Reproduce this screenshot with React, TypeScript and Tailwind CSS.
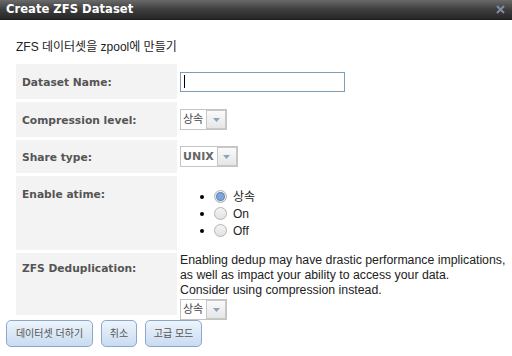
import React from "react";

const sans = "font-['Liberation_Sans','Noto_Sans_CJK_KR',sans-serif]";
const bold = "font-['DejaVu_Sans','Noto_Sans_CJK_KR',sans-serif]";

function Select({ label, strong }: { label: string; strong?: boolean }) {
  return (
    <div className="flex h-[21px] items-center border border-[#c4c4c4] bg-white">
      <span
        className={`px-[2px] text-[11px] leading-none ${
          strong ? `${bold} font-bold text-[#666]` : "text-[#444]"
        }`}
      >
        {label}
      </span>
      <span className="ml-[1px] flex h-[19px] w-[20px] items-center justify-center border border-[#c8c8c8] bg-gradient-to-b from-[#fafafa] to-[#e6e6e6]">
        <svg width="7" height="4" viewBox="0 0 7 4">
          <path d="M0 0h7L3.5 4z" fill="#8ea2c0" />
        </svg>
      </span>
    </div>
  );
}

function Radio({ checked, label }: { checked?: boolean; label: string }) {
  return (
    <li className="flex h-[17px] items-center">
      <span className="ml-[23px] mr-[10px] h-[4px] w-[4px] rounded-full bg-black" />
      <span className="flex h-[13px] w-[13px] items-center justify-center rounded-full border border-[#b4b4b4] bg-gradient-to-b from-[#f4f4f4] to-[#e2e2e2]">
        {checked && <span className="h-[7px] w-[7px] rounded-full bg-[#7ea5d6] ring-1 ring-[#5b86bd]" />}
      </span>
      <span className="ml-[6px] text-[12px] text-[#222]">{label}</span>
    </li>
  );
}

function Label({ children, pt }: { children: React.ReactNode; pt: string }) {
  return (
    <div className={`bg-[#f3f3f3] pl-[6px] ${pt} ${bold} text-[10.7px] font-bold leading-[14px] text-[#555]`}>
      {children}
    </div>
  );
}

const buttons = [
  { text: "데이터셋 더하기", w: "w-[87px]" },
  { text: "취소", w: "w-[36px]" },
  { text: "고급 모드", w: "w-[57px]" },
];

export default function App() {
  return (
    <div className={`h-[356px] w-[512px] overflow-hidden bg-white ${sans}`}>
      <div className="flex h-[20px] items-center justify-between border-b border-[#1e1e1e] bg-gradient-to-b from-[#6a6a6a] via-[#3e3e3e] to-[#262626] pl-[6px] pr-[7px]">
        <span className={`${bold} text-[11.6px] font-bold text-white`}>Create ZFS Dataset</span>
        <svg width="9" height="9" viewBox="0 0 9 9">
          <path d="M1 1l7 7M8 1L1 8" stroke="#7f8ea4" strokeWidth="2" />
        </svg>
      </div>

      <p className="ml-[16px] mt-[20px] text-[12px] leading-[15px] text-[#222]">ZFS 데이터셋을 zpool에 만들기</p>

      <div className="ml-[16px] mt-[9px] grid w-[496px] grid-cols-[161px_1fr] gap-y-[3px]">
        <Label pt="pt-[12px]">Dataset Name:</Label>
        <div className="flex h-[35px] items-center pl-[3px]">
          <div className="flex h-[20px] w-[165px] items-center border border-[#7f9db9] bg-white pl-[3px]">
            <span className="h-[13px] w-px bg-black" />
          </div>
        </div>

        <Label pt="pt-[12px]">Compression level:</Label>
        <div className="flex h-[35px] items-center pl-[3px]">
          <Select label="상속" />
        </div>

        <Label pt="pt-[11px]">Share type:</Label>
        <div className="flex h-[33px] items-center pl-[3px]">
          <Select label="UNIX" strong />
        </div>

        <Label pt="pt-[12px]">Enable atime:</Label>
        <div className="h-[74px] pt-[12px]">
          <ul>
            <Radio checked label="상속" />
            <Radio label="On" />
            <Radio label="Off" />
          </ul>
        </div>

        <Label pt="pt-[9px]">ZFS Deduplication:</Label>
        <div className="h-[62px] pl-[3px]">
          <p className="whitespace-nowrap text-[12.3px] leading-[15px] text-[#222]">
            Enabling dedup may have drastic performance implications,
            <br />
            as well as impact your ability to access your data.
            <br />
            Consider using compression instead.
          </p>
          <div className="mt-[1px] flex">
            <Select label="상속" />
          </div>
        </div>
      </div>

      <div className="ml-[6px] mt-[5px] flex gap-[8px]">
        {buttons.map((b) => (
          <button
            key={b.text}
            className={`h-[27px] ${b.w} rounded-[5px] border border-[#8aa8cf] bg-gradient-to-b from-[#eef4fb] to-[#c9dbf1] text-[10px] text-[#555]`}
          >
            {b.text}
          </button>
        ))}
      </div>
    </div>
  );
}
